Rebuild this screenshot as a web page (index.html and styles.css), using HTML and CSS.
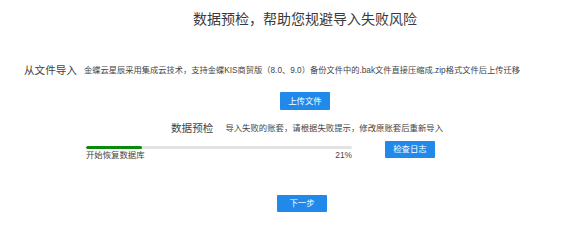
FILE: index.html
```html
<!DOCTYPE html>
<html lang="zh-CN">
<head>
<meta charset="utf-8">
<title>数据预检</title>
<link rel="stylesheet" href="styles.css">
</head>
<body>
<div class="page">
  <h1 class="title">数据预检，帮助您规避导入失败风险</h1>

  <div class="import-row">
    <span class="label">从文件导入</span>
    <span class="desc">金蝶云星辰采用集成云技术，支持金蝶KIS商贸版（8.0、9.0）备份文件中的.bak文件直接压缩成.zip格式文件后上传迁移</span>
  </div>

  <div class="center">
    <button class="btn">上传文件</button>
  </div>

  <div class="check-row">
    <span class="label">数据预检</span>
    <span class="desc">导入失败的账套，请根据失败提示，修改原账套后重新导入</span>
  </div>

  <div class="progress-row">
    <div class="progress">
      <div class="track"><div class="fill" style="width:21%"></div></div>
      <div class="progress-text">
        <span>开始恢复数据库</span>
        <span>21%</span>
      </div>
    </div>
    <button class="btn">检查日志</button>
  </div>

  <div class="center next">
    <button class="btn">下一步</button>
  </div>
</div>
</body>
</html>
```

FILE: styles.css
```css
* { box-sizing: border-box; }
html, body { margin: 0; padding: 0; background: #fff; }
body {
  font-family: "Liberation Sans", "Noto Sans CJK SC", sans-serif;
  color: #444;
}
.page {
  width: 586px;
  padding-left: 24px;
}
.title {
  margin: 0;
  padding-top: 9px;
  font-size: 14px;
  line-height: 20px;
  font-weight: normal;
  color: #3a3a3a;
  text-align: center;
}
.import-row {
  margin-top: 31px;
  display: flex;
  align-items: center;
  gap: 7px;
  height: 18px;
  white-space: nowrap;
}
.label {
  font-size: 10.6px;
  color: #444;
}
.desc {
  font-size: 8.25px;
  color: #444;
}
.center {
  display: flex;
  justify-content: center;
}
.import-row + .center { margin-top: 14px; }
.btn {
  width: 50px;
  height: 18px;
  padding: 0;
  border: none;
  border-radius: 1px;
  background: #2189ea;
  color: #fff;
  font-family: inherit;
  font-size: 8.4px;
  line-height: 18px;
}
.check-row {
  margin-top: 9px;
  padding-left: 147px;
  display: flex;
  align-items: center;
  gap: 12px;
  height: 16px;
  white-space: nowrap;
}
.check-row .desc { font-size: 8.4px; }
.progress-row {
  margin-top: 6px;
  padding-left: 62px;
  display: flex;
  align-items: flex-start;
  gap: 33px;
}
.progress-row .btn { height: 17px; line-height: 17px; }
.progress {
  width: 266px;
  padding-top: 5px;
}
.track {
  height: 3px;
  border-radius: 2px;
  background: #e3e3e3;
  overflow: hidden;
}
.fill {
  height: 100%;
  border-radius: 2px;
  background: #0a8a0a;
}
.progress-text {
  display: flex;
  justify-content: space-between;
  font-size: 8.4px;
  line-height: 12px;
  color: #444;
}
.next { margin-top: 34px; margin-left: -6px; }
.next .btn { height: 17px; line-height: 17px; }
```
